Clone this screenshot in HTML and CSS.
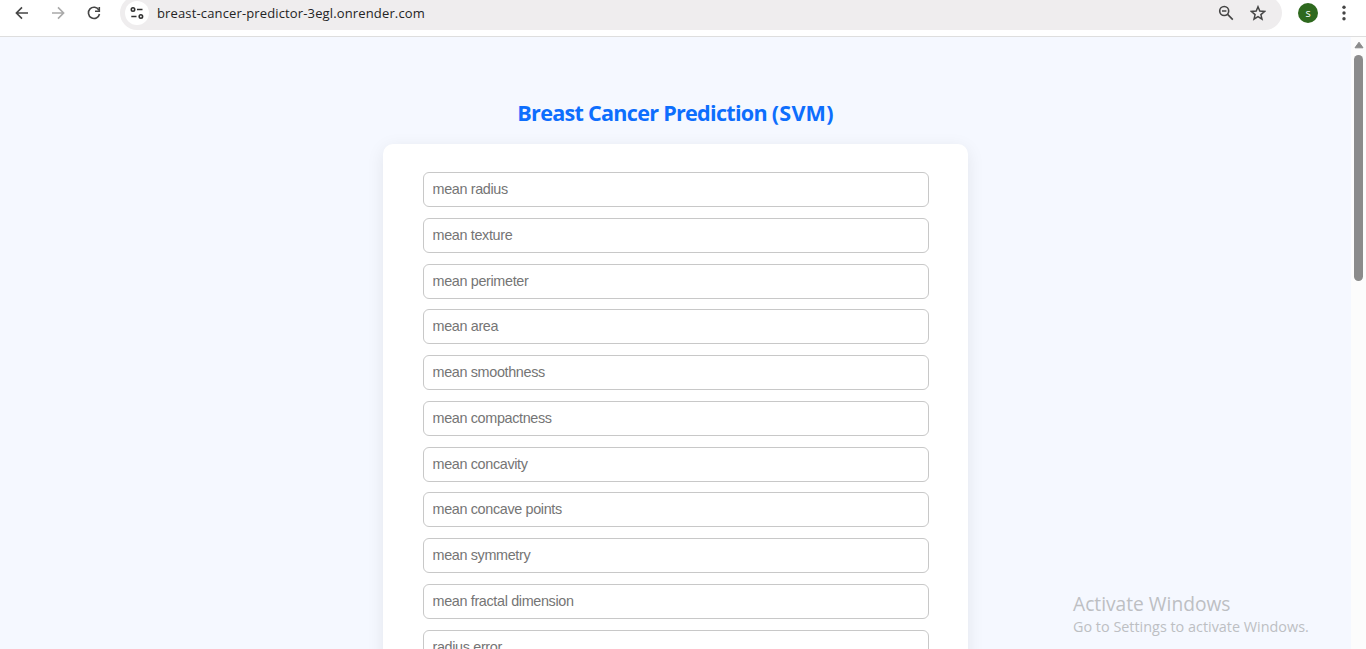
FILE: index.html
```html
<!DOCTYPE html>
<html lang="en">
<head>
<meta charset="utf-8">
<title>Breast Cancer Prediction (SVM)</title>
<link rel="stylesheet" href="styles.css">
</head>
<body>
<header class="toolbar">
  <nav class="nav">
    <svg class="icon" viewBox="0 0 16 16"><path d="M14 8H2.6M8 2.4 2.4 8 8 13.6"/></svg>
    <svg class="icon icon-off" viewBox="0 0 16 16"><path d="M2 8h11.4M8 2.4 13.6 8 8 13.6"/></svg>
    <svg class="icon" viewBox="0 0 16 16"><path d="M12.9 5.1A5.6 5.6 0 1 0 13.5 9"/><path d="M13.3 2v4.3H9"/></svg>
  </nav>
  <div class="address">
    <span class="site"><svg class="icon icon-site" viewBox="0 0 16 16"><circle cx="4" cy="4.5" r="1.7"/><path d="M8 4.5h5.5M2.3 11.5h5.2"/><circle cx="11.9" cy="11.5" r="1.7"/></svg></span>
    <span class="url">breast-cancer-predictor-3egl.onrender.com</span>
    <svg class="icon" viewBox="0 0 16 16"><circle cx="6.2" cy="6" r="4.5"/><path d="M4 6h4.4M9.6 9.4l5.2 5.2"/></svg>
    <svg class="icon icon-star" viewBox="0 0 16 16"><path d="M8 1.8l1.8 4.3 4.7.4-3.6 3.1 1.1 4.6L8 11.7l-4 2.5 1.1-4.6-3.6-3.1 4.7-.4z"/></svg>
  </div>
  <span class="avatar">s</span>
  <svg class="icon icon-menu" viewBox="0 0 16 16"><circle cx="8" cy="2.2" r="1.7"/><circle cx="8" cy="8" r="1.7"/><circle cx="8" cy="13.8" r="1.7"/></svg>
</header>
<div class="viewport">
  <main class="page">
    <h1 class="title">Breast Cancer Prediction <span class="title-model">(SVM)</span></h1>
    <form class="card">
      <input class="field" placeholder="mean radius">
      <input class="field" placeholder="mean texture">
      <input class="field" placeholder="mean perimeter">
      <input class="field" placeholder="mean area">
      <input class="field" placeholder="mean smoothness">
      <input class="field" placeholder="mean compactness">
      <input class="field" placeholder="mean concavity">
      <input class="field" placeholder="mean concave points">
      <input class="field" placeholder="mean symmetry">
      <input class="field" placeholder="mean fractal dimension">
      <input class="field" placeholder="radius error">
    </form>
  </main>
  <div class="scrollbar">
    <svg class="scroll-up" viewBox="0 0 10 8"><path d="M5 1.2 9 6.8H1z"/></svg>
    <div class="thumb"></div>
  </div>
</div>
<aside class="watermark">
  <div class="watermark-title">Activate Windows</div>
  <div class="watermark-text">Go to Settings to activate Windows.</div>
</aside>
</body>
</html>
```
FILE: styles.css
```css
* { box-sizing: border-box; }
body {
  margin: 0;
  height: 649px;
  overflow: hidden;
  display: flex;
  flex-direction: column;
  background: #fff;
  font-family: "Segoe UI", "Open Sans", "Noto Sans", sans-serif;
}
.toolbar {
  height: 37px;
  flex: none;
  display: flex;
  align-items: center;
  padding: 0 14px 11px;
  border-bottom: 1px solid #dedede;
}
.nav { display: flex; gap: 20px; width: 106px; }
.icon {
  width: 16px;
  height: 16px;
  flex: none;
  fill: none;
  stroke: #454545;
  stroke-width: 1.6;
}
.icon-off { stroke: #a9a9a9; }
.address {
  width: 1162px;
  height: 34px;
  flex: none;
  margin-top: 1px;
  display: flex;
  align-items: center;
  padding: 0 16px 0 5px;
  border-radius: 17px;
  background: #efedee;
}
.site {
  width: 24px;
  height: 24px;
  display: grid;
  place-items: center;
  border-radius: 50%;
  background: #fff;
}
.icon-site { stroke: #303030; }
.url {
  flex: 1;
  margin-left: 8px;
  color: #242424;
  font-size: 13px;
  letter-spacing: .14px;
  line-height: 20px;
}
.icon-star { margin-left: 16px; stroke-width: 1.5; }
.avatar {
  width: 20px;
  height: 20px;
  flex: none;
  margin-left: 16px;
  border-radius: 50%;
  background: #2e691e;
  color: #fff;
  font-size: 11px;
  line-height: 19px;
  text-align: center;
}
.icon-menu { margin-left: 18px; fill: #454545; stroke: none; }
.viewport { flex: 1; min-height: 0; display: flex; }
.page {
  flex: 1;
  overflow: hidden;
  padding-top: 61px;
  background: #f5f8ff;
}
.title {
  margin: 0 0 16px;
  color: #0d6efd;
  font-size: 21.6px;
  font-weight: 700;
  letter-spacing: -.73px;
  line-height: 30px;
  text-align: center;
}
.title-model { letter-spacing: .2px; }
.card {
  width: 585px;
  margin: 0 auto;
  padding: 28px 39px 28px 40px;
  display: flex;
  flex-direction: column;
  gap: 10.77px;
  border-radius: 10px;
  background: #fff;
  box-shadow: 0 4px 18px rgba(0, 0, 0, .08);
}
.field {
  width: 506px;
  height: 35px;
  flex: none;
  padding: 0 9px 1px 8.5px;
  border: 1px solid #c8c8c8;
  border-radius: 6px;
  background: #fff;
  font-family: "Liberation Sans", Arial, sans-serif;
  font-size: 14.4px;
  letter-spacing: -.35px;
}
.field::placeholder { color: #757575; opacity: 1; }
.scrollbar {
  width: 15px;
  display: flex;
  flex-direction: column;
  align-items: center;
  padding: 4px 0 0;
  background: #fcfcfc;
}
.scroll-up {
  width: 10px;
  height: 8px;
  fill: #8b8b8b;
  stroke: #8b8b8b;
  stroke-linejoin: round;
}
.thumb {
  width: 9px;
  height: 226px;
  margin-top: 6px;
  border-radius: 5px;
  background: #8b8b8b;
}
.watermark {
  position: absolute;
  left: 1073px;
  top: 592px;
  color: #bdbfc3;
  white-space: nowrap;
}
.watermark-title { font-size: 19.2px; line-height: 24px; }
.watermark-text { font-size: 14.4px; line-height: 21px; }
```
